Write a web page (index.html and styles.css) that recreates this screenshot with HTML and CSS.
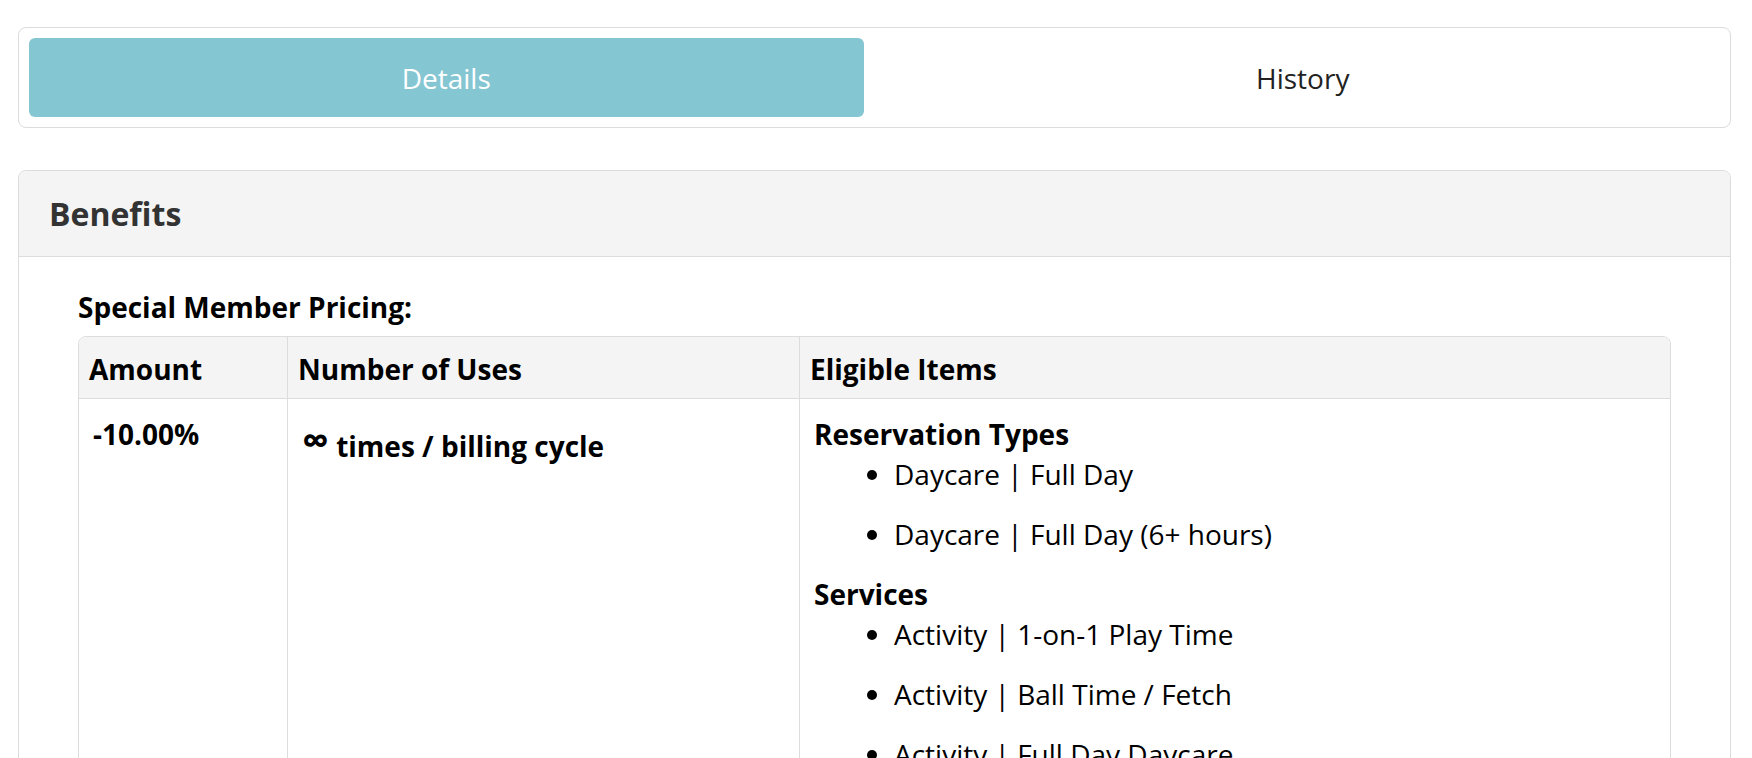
FILE: index.html
```html
<!DOCTYPE html>
<html lang="en">
<head>
<meta charset="utf-8">
<title>Membership Details</title>
<link rel="stylesheet" href="styles.css">
</head>
<body>
  <nav class="tabs">
    <button class="tab tab-active" type="button">Details</button>
    <button class="tab" type="button">History</button>
  </nav>

  <section class="panel">
    <header class="panel-header">
      <h2 class="panel-title">Benefits</h2>
    </header>
    <div class="panel-body">
      <h3 class="section-label">Special Member Pricing:</h3>
      <table class="pricing">
        <thead>
          <tr>
            <th class="col-amount">Amount</th>
            <th class="col-uses">Number of Uses</th>
            <th class="col-items">Eligible Items</th>
          </tr>
        </thead>
        <tbody>
          <tr>
            <td class="amount">-10.00%</td>
            <td class="uses"><span class="infinity">&infin;</span> times / billing cycle</td>
            <td class="items">
              <div class="item-group">Reservation Types</div>
              <ul class="item-list">
                <li>Daycare | Full Day</li>
                <li>Daycare | Full Day (6+ hours)</li>
              </ul>
              <div class="item-group">Services</div>
              <ul class="item-list">
                <li>Activity | 1-on-1 Play Time</li>
                <li>Activity | Ball Time / Fetch</li>
                <li>Activity | Full Day Daycare</li>
              </ul>
            </td>
          </tr>
        </tbody>
      </table>
    </div>
  </section>
</body>
</html>
```

FILE: styles.css
```css
* {
  box-sizing: border-box;
}

html, body {
  margin: 0;
  background: #ffffff;
}

body {
  padding: 27px 21px 0 18px;
  font-family: "Open Sans", "Liberation Sans", sans-serif;
  color: #111;
  overflow: hidden;
  height: 758px;
}

.tabs {
  display: grid;
  grid-template-columns: 1fr 1fr;
  column-gap: 22px;
  padding: 10px;
  border: 1px solid #dcdcdc;
  border-radius: 8px;
}

.tab {
  height: 79px;
  border: 0;
  border-radius: 6px;
  background: transparent;
  font-family: inherit;
  font-size: 28px;
  color: #222;
  cursor: pointer;
}

.tab-active {
  background: #85c6d3;
  color: #ffffff;
}

.panel {
  margin-top: 42px;
  border: 1px solid #dcdcdc;
  border-radius: 8px;
}

.panel-header {
  height: 86px;
  display: flex;
  align-items: center;
  padding: 0 30px;
  background: #f4f4f4;
  border-bottom: 1px solid #dcdcdc;
  border-radius: 8px 8px 0 0;
}

.panel-title {
  margin: 0;
  font-size: 32px;
  font-weight: 700;
  color: #333;
}

.panel-body {
  padding: 30px 59px 0 59px;
}

.section-label {
  margin: 0 0 9px 0;
  font-size: 28px;
  line-height: 40px;
  font-weight: 700;
  color: #000;
}

.pricing {
  width: 100%;
  border-collapse: separate;
  border-spacing: 0;
  border: 1px solid #dcdcdc;
  border-radius: 8px;
  font-size: 28px;
  line-height: 40px;
  color: #000;
}

.pricing th {
  height: 62px;
  padding: 2px 10px 0 10px;
  text-align: left;
  font-weight: 700;
  background: #f4f4f4;
  border-bottom: 1px solid #dcdcdc;
}

.pricing th:first-child {
  border-top-left-radius: 7px;
}

.pricing th:last-child {
  border-top-right-radius: 7px;
}

.pricing th + th,
.pricing td + td {
  border-left: 1px solid #dcdcdc;
}

.col-amount {
  width: 208px;
}

.col-uses {
  width: 512px;
}

.pricing td {
  vertical-align: top;
  padding: 15px 12px 0 14px;
}

.amount {
  font-weight: 700;
}

.pricing .uses {
  font-weight: 700;
  padding-top: 27px;
}

.infinity {
  font-size: 38px;
  line-height: 20px;
  position: relative;
  top: -3px;
}

.item-group {
  font-weight: 700;
}

.item-list {
  margin: 0;
  padding-left: 80px;
}

.item-list li {
  margin-bottom: 20px;
}
```
